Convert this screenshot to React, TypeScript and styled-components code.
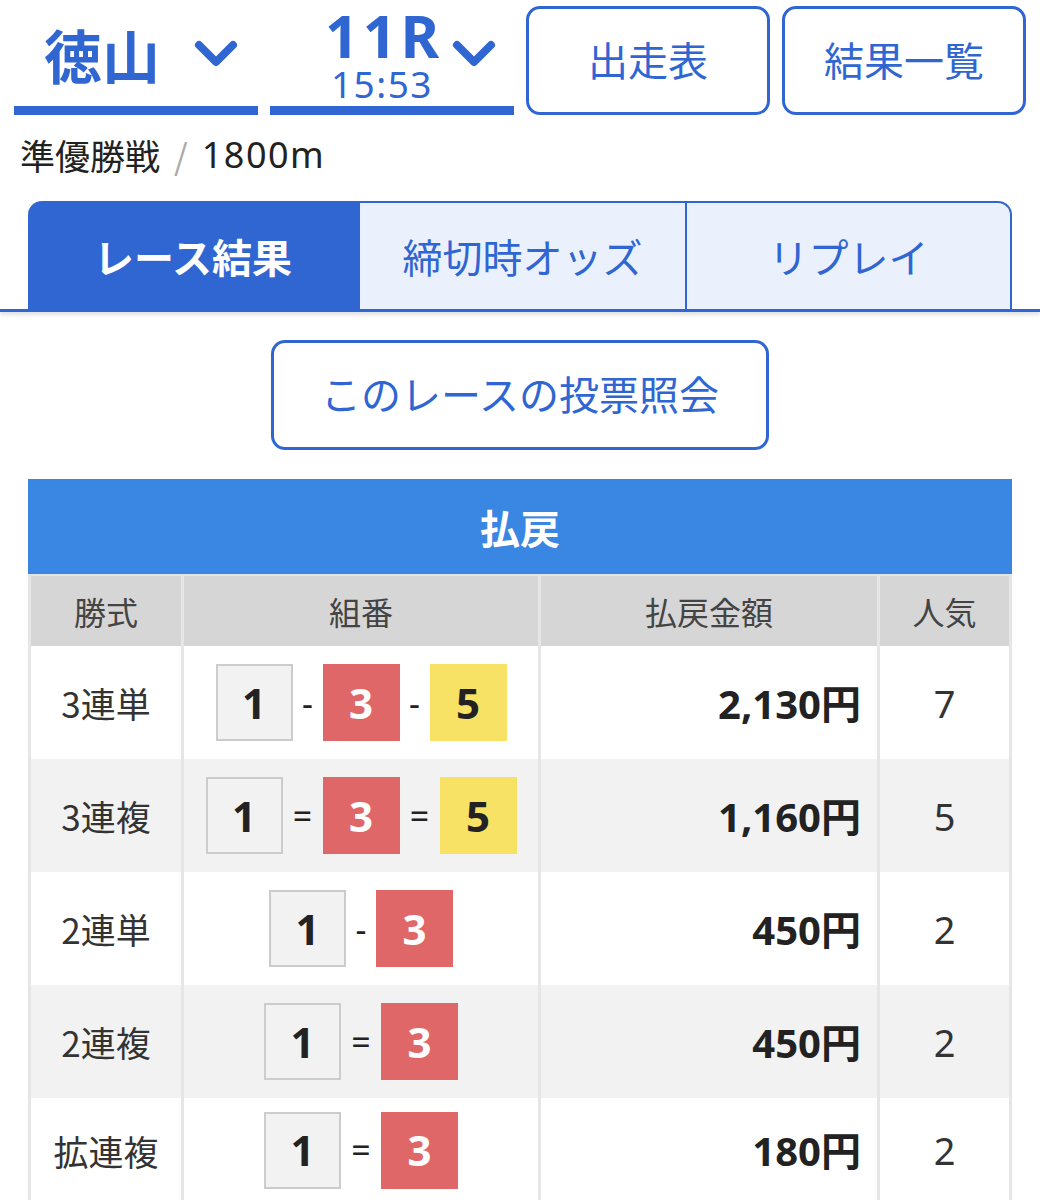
import React from "react";
import styled, { createGlobalStyle } from "styled-components";

const BLUE = "#3066d2";
const FONT = `"Noto Sans CJK JP", "Noto Sans", sans-serif`;

const Global = createGlobalStyle`
  html, body { margin: 0; padding: 0; background: #fff; }
  body { font-family: ${FONT}; color: #222; width: 1040px; }
`;

const Page = styled.div`
  width: 1040px;
  display: flex;
  flex-direction: column;
`;

const Header = styled.div`
  display: grid;
  grid-template-columns: repeat(4, 244px);
  column-gap: 12px;
  padding: 6px 14px 0;
  height: 109px;
`;

const Select = styled.div<{ $gap: number; $pl: number; $justify: string }>`
  display: flex;
  align-items: center;
  justify-content: ${(p) => p.$justify};
  gap: ${(p) => p.$gap}px;
  padding-left: ${(p) => p.$pl}px;
  border-bottom: 9px solid ${BLUE};
  box-sizing: border-box;
  height: 109px;
  padding-bottom: 4px;
  color: ${BLUE};
`;

const Venue = styled.span`
  font-size: 58px;
  font-weight: 700;
  line-height: 1;
`;

const RaceStack = styled.div`
  display: flex;
  flex-direction: column;
  align-items: center;
  width: 124px;
`;

const RaceNo = styled.span`
  font-family: "Noto Sans", sans-serif;
  font-size: 59px;
  font-weight: 700;
  line-height: 59px;
  letter-spacing: 4px;
  margin-right: -4px;
`;

const RaceTime = styled.span`
  font-family: "Noto Sans", sans-serif;
  font-size: 37px;
  line-height: 37px;
  font-weight: 400;
  letter-spacing: 1.5px;
`;

const Chevron = styled.svg`
  width: 44px;
  height: 30px;
  flex: none;
`;

const NavButton = styled.div`
  box-sizing: border-box;
  height: 109px;
  border: 3px solid ${BLUE};
  border-radius: 14px;
  display: flex;
  align-items: center;
  justify-content: center;
  color: ${BLUE};
  font-size: 40px;
  line-height: 1;
  padding-bottom: 4px;
`;

const Subtitle = styled.div`
  padding: 18px 20px 0;
  height: 44px;
  font-size: 35px;
  line-height: 44px;
  color: #222;
  display: flex;
  align-items: center;
`;

const Slash = styled.span`
  color: #aaa;
  margin: 0 14px;
`;

const Distance = styled.span`
  font-family: "Noto Sans", sans-serif;
  font-size: 36px;
  letter-spacing: 1.5px;
`;

const TabBar = styled.div`
  margin-top: 24px;
  display: flex;
  padding: 0 28px;
  border-bottom: 3px solid ${BLUE};
  box-shadow: 0 3px 4px rgba(0, 0, 0, 0.12);
`;

const Tab = styled.div<{ $active?: boolean; $pos: "first" | "mid" | "last" }>`
  box-sizing: border-box;
  height: 108px;
  width: ${(p) => (p.$pos === "first" ? 330 : 327)}px;
  display: flex;
  align-items: center;
  justify-content: center;
  font-size: 40px;
  line-height: 1;
  font-weight: ${(p) => (p.$active ? 700 : 400)};
  color: ${(p) => (p.$active ? "#fff" : BLUE)};
  background: ${(p) => (p.$active ? BLUE : "#eaf1fc")};
  border-top: 2px solid ${BLUE};
  border-left: ${(p) => (p.$pos === "first" ? "0" : `2px solid ${BLUE}`)};
  border-right: ${(p) => (p.$pos === "last" ? `2px solid ${BLUE}` : "0")};
  border-radius: ${(p) =>
    p.$pos === "first" ? "14px 0 0 0" : p.$pos === "last" ? "0 14px 0 0" : "0"};
`;

const CenterRow = styled.div`
  display: flex;
  justify-content: center;
  padding-top: 28px;
`;

const QueryButton = styled.div`
  box-sizing: border-box;
  width: 498px;
  height: 110px;
  border: 3px solid ${BLUE};
  border-radius: 14px;
  display: flex;
  align-items: center;
  justify-content: center;
  color: ${BLUE};
  font-size: 40px;
  line-height: 1;
  padding-bottom: 4px;
`;

const PayoutTable = styled.div`
  margin: 29px 28px 0;
  width: 984px;
`;

const TableTitle = styled.div`
  height: 97px;
  background: #3a86e3;
  color: #fff;
  font-size: 40px;
  font-weight: 700;
  display: flex;
  align-items: center;
  justify-content: center;
  border-bottom: 2px solid #e4e4e4;
  box-sizing: border-box;
`;

const Row = styled.div<{ $bg: string; $h: number }>`
  display: grid;
  grid-template-columns: 153px 357px 339px 135px;
  height: ${(p) => p.$h}px;
  background: ${(p) => p.$bg};
`;

const Cell = styled.div<{ $align?: "center" | "right"; $last?: boolean }>`
  box-sizing: border-box;
  border-left: 3px solid #e6e6e6;
  border-right: ${(p) => (p.$last ? "3px solid #e6e6e6" : "0")};
  display: flex;
  align-items: center;
  justify-content: ${(p) => (p.$align === "right" ? "flex-end" : "center")};
  padding: ${(p) => (p.$align === "right" ? "0 16px 0 0" : "0")};
`;

const HeadText = styled.span`
  font-size: 32px;
  color: #444;
  line-height: 1;
`;

const KindText = styled.span`
  font-size: 35px;
  color: #333;
  line-height: 1;
`;

const Amount = styled.span`
  font-family: "Noto Sans", sans-serif;
  font-size: 40px;
  font-weight: 700;
  color: #222;
  line-height: 1;
`;

const Yen = styled.span`
  font-family: ${FONT};
  font-weight: 700;
`;

const Pop = styled.span`
  font-family: "Noto Sans", sans-serif;
  font-size: 38px;
  color: #333;
  line-height: 1;
`;

const Combo = styled.div`
  display: flex;
  align-items: center;
`;

const BOX_COLORS: Record<number, { bg: string; fg: string; border: string }> = {
  1: { bg: "#f2f2f2", fg: "#222", border: "#cccccc" },
  3: { bg: "#e06767", fg: "#fff", border: "#e06767" },
  5: { bg: "#f7e265", fg: "#222", border: "#f7e265" },
};

const NumBox = styled.div<{ $n: number }>`
  box-sizing: border-box;
  width: 77px;
  height: 77px;
  background: ${(p) => BOX_COLORS[p.$n].bg};
  color: ${(p) => BOX_COLORS[p.$n].fg};
  border: 2px solid ${(p) => BOX_COLORS[p.$n].border};
  display: flex;
  align-items: center;
  justify-content: center;
  font-family: "Noto Sans", sans-serif;
  font-size: 42px;
  font-weight: 700;
  line-height: 1;
`;

const Sep = styled.span<{ $eq: boolean }>`
  font-family: "Noto Sans", sans-serif;
  font-size: 34px;
  color: #222;
  width: ${(p) => (p.$eq ? 40 : 30)}px;
  text-align: center;
  line-height: 1;
`;

const ChevronIcon = () => (
  <Chevron viewBox="0 0 44 30">
    <polyline
      points="5,6 22,23 39,6"
      fill="none"
      stroke={BLUE}
      strokeWidth="8"
      strokeLinecap="round"
      strokeLinejoin="round"
    />
  </Chevron>
);

type Payout = { kind: string; nums: number[]; eq: boolean; amount: string; pop: string };

const rows: Payout[] = [
  { kind: "3連単", nums: [1, 3, 5], eq: false, amount: "2,130", pop: "7" },
  { kind: "3連複", nums: [1, 3, 5], eq: true, amount: "1,160", pop: "5" },
  { kind: "2連単", nums: [1, 3], eq: false, amount: "450", pop: "2" },
  { kind: "2連複", nums: [1, 3], eq: true, amount: "450", pop: "2" },
  { kind: "拡連複", nums: [1, 3], eq: true, amount: "180", pop: "2" },
];

export default function App() {
  return (
    <Page>
      <Global />
      <Header>
        <Select $gap={34} $pl={10} $justify="center">
          <Venue>徳山</Venue>
          <ChevronIcon />
        </Select>
        <Select $gap={8} $pl={50} $justify="flex-start">
          <RaceStack>
            <RaceNo>11R</RaceNo>
            <RaceTime>15:53</RaceTime>
          </RaceStack>
          <ChevronIcon />
        </Select>
        <NavButton>出走表</NavButton>
        <NavButton>結果一覧</NavButton>
      </Header>
      <Subtitle>
        準優勝戦<Slash>/</Slash>
        <Distance>1800m</Distance>
      </Subtitle>
      <TabBar>
        <Tab $active $pos="first">レース結果</Tab>
        <Tab $pos="mid">締切時オッズ</Tab>
        <Tab $pos="last">リプレイ</Tab>
      </TabBar>
      <CenterRow>
        <QueryButton>このレースの投票照会</QueryButton>
      </CenterRow>
      <PayoutTable>
        <TableTitle>払戻</TableTitle>
        <Row $bg="#d6d6d6" $h={70}>
          <Cell><HeadText>勝式</HeadText></Cell>
          <Cell><HeadText>組番</HeadText></Cell>
          <Cell><HeadText>払戻金額</HeadText></Cell>
          <Cell $last><HeadText>人気</HeadText></Cell>
        </Row>
        {rows.map((r, i) => (
          <Row key={r.kind} $bg={i % 2 === 1 ? "#f2f2f2" : "#ffffff"} $h={i === 4 ? 104 : 113}>
            <Cell><KindText>{r.kind}</KindText></Cell>
            <Cell>
              <Combo>
                {r.nums.map((n, j) => (
                  <React.Fragment key={j}>
                    {j > 0 && <Sep $eq={r.eq}>{r.eq ? "=" : "-"}</Sep>}
                    <NumBox $n={n}>{n}</NumBox>
                  </React.Fragment>
                ))}
              </Combo>
            </Cell>
            <Cell $align="right">
              <Amount>
                {r.amount}
                <Yen>円</Yen>
              </Amount>
            </Cell>
            <Cell $last><Pop>{r.pop}</Pop></Cell>
          </Row>
        ))}
      </PayoutTable>
    </Page>
  );
}
